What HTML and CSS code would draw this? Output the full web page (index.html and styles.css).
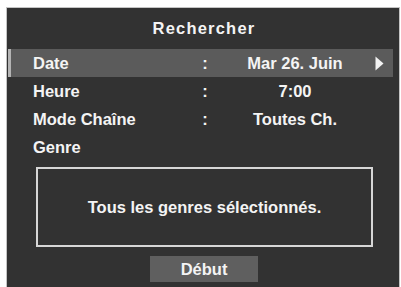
FILE: index.html
```html
<!DOCTYPE html>
<html lang="fr">
<head>
<meta charset="utf-8">
<title>Rechercher</title>
<link rel="stylesheet" href="styles.css">
</head>
<body>
<div class="panel">
  <div class="title">Rechercher</div>
  <div class="row selected">
    <span class="label">Date</span>
    <span class="colon">:</span>
    <span class="value">Mar 26. Juin</span>
    <span class="arrow"><svg width="9" height="15" viewBox="0 0 9 15"><polygon points="0.5,0.5 8.5,7.5 0.5,14.5" fill="#f2f2f2"/></svg></span>
  </div>
  <div class="row">
    <span class="label">Heure</span>
    <span class="colon">:</span>
    <span class="value">7:00</span>
    <span class="arrow"></span>
  </div>
  <div class="row">
    <span class="label">Mode Chaîne</span>
    <span class="colon">:</span>
    <span class="value">Toutes Ch.</span>
    <span class="arrow"></span>
  </div>
  <div class="row">
    <span class="label">Genre</span>
  </div>
  <div class="genres">Tous les genres sélectionnés.</div>
  <div class="actions">
    <div class="button">Début</div>
  </div>
</div>
</body>
</html>
```
FILE: styles.css
```css
html, body {
  margin: 0;
  padding: 0;
  background: #ffffff;
  overflow: hidden;
}
body {
  font-family: "Liberation Sans", Arial, sans-serif;
  font-weight: bold;
  font-size: 16.5px;
  color: #f4f4f4;
}
.panel {
  margin: 7px 1px 0 6px;
  height: 290px;
  background: #323232;
  border: 1px solid #c4c4c4;
  border-bottom: none;
  box-sizing: border-box;
  display: flex;
  flex-direction: column;
}
.title {
  height: 41px;
  display: flex;
  align-items: center;
  justify-content: center;
  letter-spacing: 1.2px;
  padding-left: 2px;
}
.row {
  height: 28px;
  margin: 0 6px 0 1px;
  padding-left: 25px;
  display: grid;
  grid-template-columns: 160px 24px 156px 18px;
  align-items: center;
  box-sizing: border-box;
}
.row.selected {
  background: #5b5b5b;
  border-left: 3px solid #b4b4b4;
  padding-left: 22px;
}
.colon {
  text-align: center;
}
.value {
  text-align: center;
}
.arrow {
  display: flex;
  align-items: center;
  padding-left: 2px;
}
.genres {
  margin: 6px 26px 0 29px;
  height: 80px;
  border: 2px solid #d6d6d6;
  box-sizing: border-box;
  display: flex;
  align-items: center;
  justify-content: center;
}
.actions {
  display: flex;
  justify-content: center;
  margin-top: 9px;
  padding-left: 2px;
}
.button {
  width: 108px;
  height: 26px;
  background: #5f5f5f;
  display: flex;
  align-items: center;
  justify-content: center;
}
```
